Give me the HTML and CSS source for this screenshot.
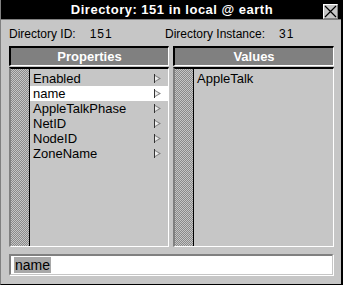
FILE: index.html
```html
<!DOCTYPE html>
<html>
<head>
    <meta charset="UTF-8" />
    <title>Directory</title>
    <link rel="stylesheet" href="styles.css">
</head>
<body>
<div class="window">
    <div class="title-bar">
        <div class="title">Directory: 151 in local @ earth</div>
        <button class="close-button">
            <svg width="13" height="13" viewBox="0 0 13 13">
                <path d="M1 1 L12 12 M12 1 L1 12" stroke="#000" stroke-width="1.2" fill="none"/>
            </svg>
        </button>
    </div>

    <div class="content">
        <div class="info-row">
            <div class="info-item">Directory ID:<span class="info-value">151</span></div>
            <div class="info-item">Directory Instance:<span class="info-value">31</span></div>
        </div>

        <div class="columns">
            <div class="column">
                <div class="column-header">Properties</div>
                <div class="list">
                    <div class="list-gutter"></div>
                    <div class="list-items">
                        <div class="list-item">Enabled<span class="arrow"></span></div>
                        <div class="list-item selected">name<span class="arrow"></span></div>
                        <div class="list-item">AppleTalkPhase<span class="arrow"></span></div>
                        <div class="list-item">NetID<span class="arrow"></span></div>
                        <div class="list-item">NodeID<span class="arrow"></span></div>
                        <div class="list-item">ZoneName<span class="arrow"></span></div>
                    </div>
                </div>
            </div>
            <div class="column">
                <div class="column-header">Values</div>
                <div class="list">
                    <div class="list-gutter"></div>
                    <div class="list-items">
                        <div class="list-item">AppleTalk</div>
                    </div>
                </div>
            </div>
        </div>

        <div class="edit-field">
            <span class="edit-selection">name</span>
        </div>
    </div>
</div>
</body>
</html>
```

FILE: styles.css
```css
* {
    margin: 0;
    padding: 0;
    box-sizing: border-box;
    font-family: "Liberation Sans", Arial, sans-serif;
}

:root {
    --window-bg: #c6c6c6;
    --dark-gray: #808080;
    --light: #ffffff;
    --text-color: #000000;
}

body {
    background-color: var(--window-bg);
}

.window {
    width: 343px;
    height: 285px;
    display: flex;
    flex-direction: column;
    background-color: var(--window-bg);
    border-left: 1px solid var(--dark-gray);
    border-right: 2px solid #000;
    border-bottom: 1px solid #000;
}

.title-bar {
    height: 23px;
    background-color: #000;
    border-bottom: 1px solid var(--dark-gray);
    display: flex;
    align-items: center;
    justify-content: center;
    position: relative;
}

.title {
    color: var(--light);
    font-weight: bold;
    font-size: 13px;
    letter-spacing: 0.5px;
    margin-left: 2px;
}

.close-button {
    position: absolute;
    right: 3px;
    top: 4px;
    width: 15px;
    height: 15px;
    background-color: var(--window-bg);
    border-top: 1px solid var(--light);
    border-left: 1px solid var(--light);
    border-bottom: 1px solid var(--dark-gray);
    border-right: 1px solid var(--dark-gray);
    display: flex;
    align-items: center;
    justify-content: center;
}

.content {
    flex: 1;
    display: flex;
    flex-direction: column;
    padding: 4px 8px 9px 8px;
}

.info-row {
    display: flex;
    height: 20px;
    align-items: center;
    font-size: 12px;
    color: var(--text-color);
}

.info-item {
    width: 156px;
}

.info-value {
    margin-left: 14px;
    letter-spacing: 1px;
}

.columns {
    display: grid;
    grid-template-columns: 160px 161px;
    gap: 4px;
    margin-top: 2px;
}

.column {
    display: flex;
    flex-direction: column;
    gap: 1px;
}

.column-header {
    height: 20px;
    background-color: var(--dark-gray);
    border-top: 2px solid #000;
    border-left: 2px solid #000;
    border-bottom: 1px solid var(--light);
    border-right: 1px solid var(--light);
    color: var(--light);
    font-weight: bold;
    font-size: 13px;
    display: flex;
    align-items: center;
    justify-content: center;
}

.list {
    height: 180px;
    display: flex;
    border-top: 2px solid #000;
    border-left: 2px solid var(--dark-gray);
    border-bottom: 1px solid var(--light);
    border-right: 1px solid var(--light);
}

.list-gutter {
    width: 19px;
    border-right: 1px solid #000;
    background-color: #c6c6c6;
    background-image: conic-gradient(#8a8a8a 25%, transparent 0 50%, #8a8a8a 0 75%, transparent 0);
    background-size: 2px 2px;
}

.list-items {
    flex: 1;
    padding-top: 2px;
}

.list-item {
    height: 15px;
    display: flex;
    align-items: center;
    justify-content: space-between;
    padding: 0 6px 0 3px;
    font-size: 13px;
    color: var(--text-color);
}

.list-item.selected {
    background-color: var(--light);
}

.arrow {
    width: 8px;
    height: 9px;
    border-left: 1px solid #333;
    position: relative;
}

.arrow::after {
    content: "";
    position: absolute;
    left: 0;
    top: 1px;
    width: 6px;
    height: 7px;
    background-color: var(--dark-gray);
    clip-path: polygon(0 0, 100% 50%, 0 100%);
}

.arrow::before {
    content: "";
    position: absolute;
    left: 0;
    top: 2px;
    width: 4px;
    height: 5px;
    background-color: #eeeeee;
    clip-path: polygon(0 0, 100% 50%, 0 100%);
    z-index: 1;
}

.edit-field {
    margin-top: 7px;
    height: 21px;
    background-color: var(--light);
    border-top: 2px solid var(--dark-gray);
    border-left: 2px solid var(--dark-gray);
    border-bottom: 1px solid var(--window-bg);
    border-right: 1px solid var(--window-bg);
    box-shadow: 1px 1px 0 var(--light);
    display: flex;
    align-items: center;
    padding-left: 3px;
}

.edit-selection {
    background-color: #a8a8a8;
    font-size: 14px;
    color: var(--text-color);
    padding: 0 1px;
}
```
